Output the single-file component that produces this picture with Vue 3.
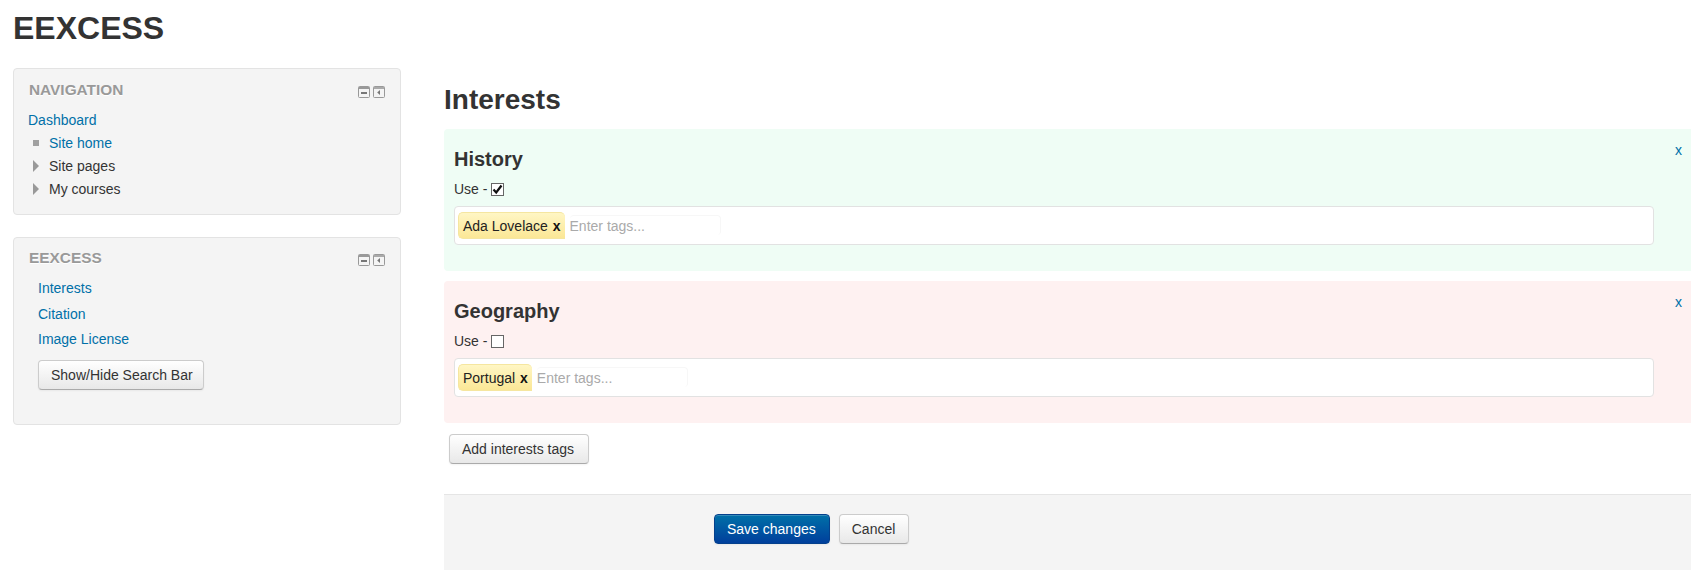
<script setup>
const interests = [
  { name: 'History', tone: 'green', checked: true, tag: 'Ada Lovelace', inputWidth: 151 },
  { name: 'Geography', tone: 'red', checked: false, tag: 'Portugal', inputWidth: 151 },
]
const nav = [
  { label: 'Site home', link: true, bullet: 'square' },
  { label: 'Site pages', link: false, bullet: 'arrow' },
  { label: 'My courses', link: false, bullet: 'arrow' },
]
const eexcess = ['Interests', 'Citation', 'Image License']
</script>

<template>
  <div class="page">
    <h1 class="site-title">EEXCESS</h1>
    <div class="columns">
      <aside class="side">
        <section class="block nav-block">
          <header class="block-head">
            <h2>NAVIGATION</h2>
            <div class="ctrls">
              <svg width="12" height="12" viewBox="0 0 12 12"><rect x=".5" y=".5" width="11" height="11" rx="1" fill="#f4f4f4" stroke="#999"/><rect x="1" y="1" width="10" height="2" fill="#999"/><rect x="3" y="6" width="6" height="2" fill="#777"/></svg>
              <svg width="12" height="12" viewBox="0 0 12 12"><rect x=".5" y=".5" width="11" height="11" rx="1" fill="#f4f4f4" stroke="#999"/><rect x="1" y="1" width="10" height="2" fill="#aaa"/><path d="M7 4L4.2 6.5L7 9Z" fill="#777"/></svg>
            </div>
          </header>
          <a class="link dash">Dashboard</a>
          <ul class="tree">
            <li v-for="n in nav" :key="n.label">
              <span class="bullet" :class="n.bullet"></span>
              <a v-if="n.link" class="link">{{ n.label }}</a>
              <span v-else>{{ n.label }}</span>
            </li>
          </ul>
        </section>
        <section class="block ex-block">
          <header class="block-head">
            <h2>EEXCESS</h2>
            <div class="ctrls">
              <svg width="12" height="12" viewBox="0 0 12 12"><rect x=".5" y=".5" width="11" height="11" rx="1" fill="#f4f4f4" stroke="#999"/><rect x="1" y="1" width="10" height="2" fill="#999"/><rect x="3" y="6" width="6" height="2" fill="#777"/></svg>
              <svg width="12" height="12" viewBox="0 0 12 12"><rect x=".5" y=".5" width="11" height="11" rx="1" fill="#f4f4f4" stroke="#999"/><rect x="1" y="1" width="10" height="2" fill="#aaa"/><path d="M7 4L4.2 6.5L7 9Z" fill="#777"/></svg>
            </div>
          </header>
          <ul class="ex-links">
            <li v-for="l in eexcess" :key="l"><a class="link">{{ l }}</a></li>
          </ul>
          <button class="btn show-btn">Show/Hide Search Bar</button>
        </section>
      </aside>
      <main class="main">
        <h2 class="main-title">Interests</h2>
        <section v-for="i in interests" :key="i.name" class="card" :class="i.tone">
          <a class="link close">x</a>
          <h3>{{ i.name }}</h3>
          <div class="use">
            Use -
            <span class="check">
              <svg v-if="i.checked" width="11" height="11" viewBox="0 0 11 11"><path d="M1.5 5.5L4.2 8.5L9.5 1.5" fill="none" stroke="#111" stroke-width="2.2"/></svg>
            </span>
          </div>
          <div class="tagbox">
            <span class="tag">{{ i.tag }} <b>x</b></span>
            <span class="tag-input" :style="{ width: i.inputWidth + 'px' }">Enter tags...</span>
          </div>
        </section>
        <div class="add-row"><button class="btn add-btn">Add interests tags</button></div>
        <div class="footer">
          <button class="btn primary">Save changes</button>
          <button class="btn">Cancel</button>
        </div>
      </main>
    </div>
  </div>
</template>

<style>
html, body { margin: 0; background: #fff; overflow: hidden; }
</style>

<style scoped>
.page {
  width: 1691px;
  height: 570px;
  overflow: hidden;
  box-sizing: border-box;
  font: 14px/20px "Liberation Sans", Arial, sans-serif;
  color: #333;
}
.site-title {
  margin: 0;
  padding: 10px 13px 0;
  font-size: 32px;
  line-height: 36px;
  height: 58px;
  box-sizing: border-box;
  color: #333;
}
.columns { display: flex; align-items: flex-start; padding: 10px 0 0 13px; }
.side { width: 388px; flex: none; display: flex; flex-direction: column; gap: 22px; }
.block {
  background: #f4f4f4;
  border: 1px solid #e3e3e3;
  border-radius: 4px;
  box-sizing: border-box;
  padding: 11px 15px;
}
.nav-block { height: 147px; }
.ex-block { height: 188px; padding-top: 10px; }
.block-head { display: flex; justify-content: space-between; align-items: center; height: 20px; }
.block-head h2 {
  margin: 0;
  font-size: 15.4px;
  line-height: 20px;
  color: #999;
  text-shadow: 0 1px 0 #fff;
}
.ctrls { display: flex; gap: 3px; margin-top: 4px; }
.link { color: #0070a8; text-decoration: none; }
.dash { display: block; margin: 9px 0 0 -1px; line-height: 23px; }
.tree { list-style: none; margin: -1px 0 0; padding: 0; }
.tree li { display: flex; align-items: center; height: 23px; }
.bullet { display: block; width: 20px; flex: none; }
.bullet.square::before {
  content: "";
  display: block;
  width: 6px;
  height: 6px;
  margin-left: 4px;
  background: #a0a0a0;
}
.bullet.arrow::before {
  content: "";
  display: block;
  width: 0;
  height: 0;
  margin-left: 4px;
  border-left: 6px solid #999;
  border-top: 6px solid transparent;
  border-bottom: 6px solid transparent;
}
.ex-links { list-style: none; margin: 8px 0 0 9px; padding: 0; }
.ex-links li { height: 25.5px; line-height: 25px; }
.show-btn { margin: 7px 0 0 9px; padding-right: 10px; }
.add-btn { padding-right: 14px; }
.btn {
  font: 14px/20px "Liberation Sans", Arial, sans-serif;
  color: #333;
  height: 30px;
  padding: 0 13px 0 12px;
  border: 1px solid #ccc;
  border-bottom-color: #aaa;
  border-radius: 4px;
  background: linear-gradient(#fff, #e8e8e8);
  box-shadow: inset 0 1px 0 rgba(255,255,255,.2), 0 1px 2px rgba(0,0,0,.05);
  display: block;
}
.show-btn { padding-right: 10px; }
.add-btn { padding-right: 14px; }
.main { width: 1247px; margin-left: 43px; flex: none; }
.main-title {
  margin: 0;
  padding-top: 17px;
  font-size: 28px;
  line-height: 30px;
  height: 61px;
  box-sizing: border-box;
  color: #333;
}
.card {
  position: relative;
  height: 142px;
  box-sizing: border-box;
  padding: 19px 37px 0 10px;
  margin-bottom: 10px;
  border-radius: 4px 0 0 4px;
}
.card.green { background: #effdf5; }
.card.red { background: #fef1f1; }
.close { position: absolute; right: 9px; top: 11px; }
.card h3 { margin: 0; font-size: 20px; line-height: 22px; color: #333; }
.use { display: flex; align-items: center; gap: 4px; margin-top: 9px; height: 20px; }
.check {
  width: 11px;
  height: 11px;
  border: 1px solid #666;
  background: #fff;
  display: block;
}
.check svg { display: block; }
.tagbox {
  margin-top: 7px;
  height: 39px;
  box-sizing: border-box;
  background: #fff;
  border: 1px solid #e2e2e2;
  border-radius: 4px;
  display: flex;
  align-items: flex-start;
  padding: 5px 3px;
}
.tag {
  height: 27px;
  box-sizing: border-box;
  line-height: 26px;
  padding: 0 4px;
  background: linear-gradient(#fff6c4, #fbe796);
  border: 1px solid #f5e6a0;
  border-right: 0;
  border-radius: 5px 5px 0 5px;
  color: #222;
  white-space: nowrap;
}
.tag b { color: #111; font-size: 14px; margin-left: 1px; }
.tag-input {
  height: 20px;
  margin: 3px 0 0 5px;
  line-height: 20px;
  color: #aaa;
  border-top: 1px solid #f7f7f7;
  border-right: 1px solid #f7f7f7;
  border-radius: 4px;
  box-sizing: border-box;
}
.add-row { padding: 1px 0 0 5px; }
.footer {
  margin-top: 30px;
  height: 100px;
  box-sizing: border-box;
  background: #f4f4f4;
  border-top: 1px solid #e5e5e5;
  padding: 19px 0 0 270px;
  display: flex;
  align-items: flex-start;
  gap: 9px;
}
.primary {
  color: #fff;
  border-color: #04408c;
  background: linear-gradient(#0070a8, #003f9c);
}
</style>
